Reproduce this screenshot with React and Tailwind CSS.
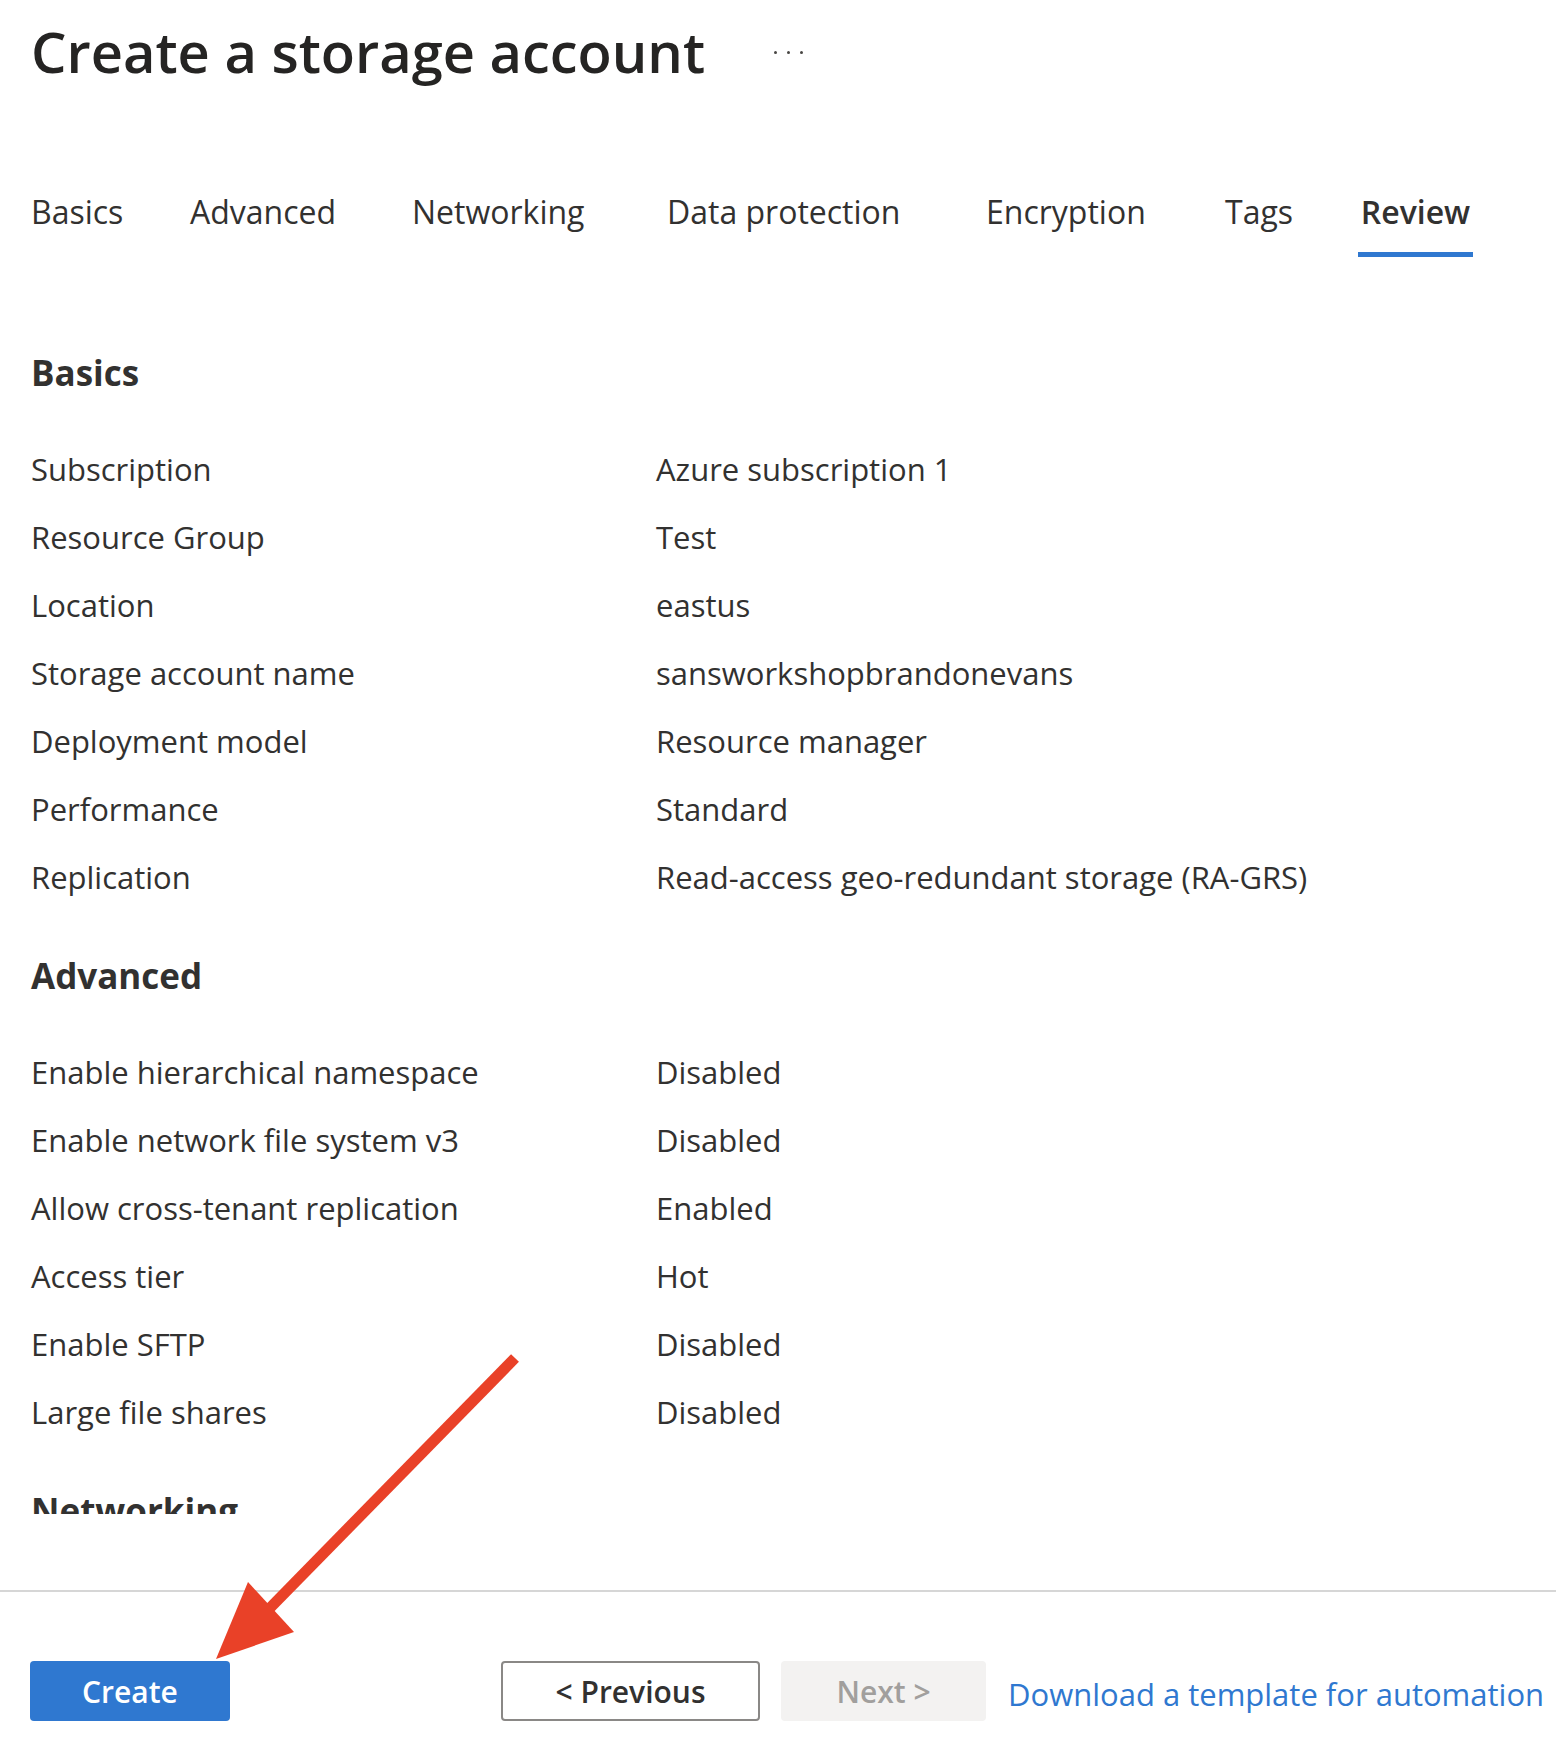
import React from 'react';

const basics = [
  ['Subscription', 'Azure subscription 1'],
  ['Resource Group', 'Test'],
  ['Location', 'eastus'],
  ['Storage account name', 'sansworkshopbrandonevans'],
  ['Deployment model', 'Resource manager'],
  ['Performance', 'Standard'],
  ['Replication', 'Read-access geo-redundant storage (RA-GRS)'],
];

const advanced = [
  ['Enable hierarchical namespace', 'Disabled'],
  ['Enable network file system v3', 'Disabled'],
  ['Allow cross-tenant replication', 'Enabled'],
  ['Access tier', 'Hot'],
  ['Enable SFTP', 'Disabled'],
  ['Large file shares', 'Disabled'],
];

const tabs = [
  { label: 'Basics', w: 'w-[159px]' },
  { label: 'Advanced', w: 'w-[222px]' },
  { label: 'Networking', w: 'w-[255px]' },
  { label: 'Data protection', w: 'w-[319px]' },
  { label: 'Encryption', w: 'w-[239px]' },
  { label: 'Tags', w: 'w-[133px]' },
];

const Row = ({ label, value }) => (
  <div className="flex h-[68px] items-center text-[31px] leading-[68px]">
    <div className="w-[625px] shrink-0">{label}</div>
    <div>{value}</div>
  </div>
);

const Section = ({ title, rows }) => (
  <div className="mb-[45px]">
    <h2 className="h-[40px] text-[35px] font-bold leading-[40px] text-[#323130]">{title}</h2>
    <div className="mt-[42px]">
      {rows.map(([l, v]) => (
        <Row key={l} label={l} value={v} />
      ))}
    </div>
  </div>
);

export default function App() {
  return (
    <div className="relative h-[1738px] w-[1556px] overflow-hidden bg-white font-['Open_Sans','Noto_Sans',sans-serif] text-[#323130]">
      <div className="flex items-center pl-[31px] pt-[23px]">
        <h1 className="h-[56px] text-[56px] font-semibold leading-[56px] text-[#252423]">
          Create a storage account
        </h1>
        <div className="ml-[69px] flex gap-[10px] pt-[2px]">
          <span className="h-[3px] w-[3px] rounded-full bg-[#484644]" />
          <span className="h-[3px] w-[3px] rounded-full bg-[#484644]" />
          <span className="h-[3px] w-[3px] rounded-full bg-[#484644]" />
        </div>
      </div>

      <div className="mt-[113px] flex pl-[31px] text-[32px] leading-[40px]">
        {tabs.map((t) => (
          <div key={t.label} className={`${t.w} shrink-0`}>
            <div className="h-[40px]">{t.label}</div>
          </div>
        ))}
        <div className="w-[115px] border-b-[5px] border-[#2f78d0] pb-[20px] text-center font-semibold">
          Review
        </div>
      </div>

      <div className="h-[1257px] overflow-hidden pl-[31px] pt-[96px]">
        <Section title="Basics" rows={basics} />
        <Section title="Advanced" rows={advanced} />
        <h2 className="h-[40px] text-[35px] font-bold leading-[40px]">Networking</h2>
      </div>

      <div className="mt-[76px] border-t-2 border-[#d6d6d6]">
        <div className="flex items-center pl-[30px] pt-[69px]">
          <button className="h-[60px] w-[200px] rounded-[4px] bg-[#2f78d0] text-[30px] font-semibold text-white">
            Create
          </button>
          <button className="ml-[271px] h-[60px] w-[259px] rounded-[4px] border-2 border-[#8a8886] bg-white text-[30px] font-semibold text-[#323130]">
            &lt; Previous
          </button>
          <button className="ml-[21px] h-[60px] w-[205px] rounded-[4px] bg-[#f3f2f1] text-[30px] font-semibold text-[#a19f9d]">
            Next &gt;
          </button>
          <a className="ml-[22px] pt-[6px] text-[31px] text-[#2f78d0]">Download a template for automation</a>
        </div>
      </div>

      <svg
        className="pointer-events-none absolute left-0 top-0"
        width="1556"
        height="1738"
        viewBox="0 0 1556 1738"
      >
        <line x1="515" y1="1358" x2="268" y2="1610" stroke="#e94128" strokeWidth="11" />
        <polygon points="216,1659 248,1582 294,1632" fill="#e94128" />
      </svg>
    </div>
  );
}
